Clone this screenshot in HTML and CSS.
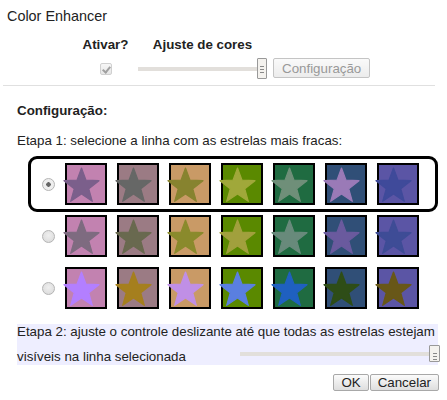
FILE: index.html
```html
<!DOCTYPE html>
<html lang="pt">
<head>
    <meta charset="UTF-8">
    <title>Color Enhancer</title>
    <link rel="stylesheet" href="styles.css">
</head>
<body>
    <div id="title">Color Enhancer</div>

    <div class="controls">
        <div class="head">Ativar?</div>
        <div class="head">Ajuste de cores</div>
        <div></div>
        <div class="cell-center"><span class="checkbox"></span></div>
        <div class="cell-slider"><div class="slider"><div class="track"></div><div class="thumb"></div></div></div>
        <div><button class="btn" disabled>Configuração</button></div>
    </div>

    <div class="separator"></div>

    <div id="setup">
        <div class="setup-title">Configuração:</div>
        <div class="step1">Etapa 1: selecione a linha com as estrelas mais fracas:</div>
        <div id="rows"></div>
        <div class="step2">
            <div class="step2-line">Etapa 2: ajuste o controle deslizante até que todas as estrelas estejam</div>
            <div class="step2-line second">
                <span>visíveis na linha selecionada</span>
                <div class="slider wide"><div class="track"></div><div class="thumb"></div></div>
            </div>
        </div>
        <div class="actions">
            <button class="btn">OK</button><button class="btn">Cancelar</button>
        </div>
    </div>

    <script>
        const squares = ['#c282b0', '#9b7b84', '#c99a66', '#5a8900', '#1f6b41', '#304f77', '#5b55a5'];
        const stars = [
            ['#7b5f8b', '#666766', '#87832f', '#a0a83a', '#6f8f79', '#9a7ab7', '#3f4a9a'],
            ['#7e6b80', '#69694f', '#8a8a2c', '#a1a03d', '#688a7b', '#6a5a9e', '#3e4c96'],
            ['#b37fff', '#a57f1e', '#c08fe6', '#5a7fe0', '#1f60c0', '#2e4d17', '#685718']
        ];
        const starPoints = '0,-18.4 4.5,-6.2 17.5,-5.7 7.3,2.4 10.8,14.9 0,7.7 -10.8,14.9 -7.3,2.4 -17.5,-5.7 -4.5,-6.2';

        function buildRows() {
            const rowsDiv = document.getElementById('rows');
            stars.forEach((row, i) => {
                const rowDiv = document.createElement('div');
                rowDiv.className = i === 0 ? 'row selected' : 'row';
                let html = `<span class="radio${i === 0 ? ' checked' : ''}"></span>`;
                row.forEach((star, j) => {
                    html += `<svg class="swatch" viewBox="0 0 42 42" width="42" height="42">
                        <rect x="1" y="1" width="40" height="40" fill="${squares[j]}" stroke="#000" stroke-width="2"/>
                        <polygon transform="translate(16.5 23.4)" points="${starPoints}" fill="${star}" stroke="${star}" stroke-width="1.2" stroke-linejoin="round"/>
                    </svg>`;
                });
                rowDiv.innerHTML = html;
                rowsDiv.appendChild(rowDiv);
            });
        }

        buildRows();
    </script>
</body>
</html>
```

FILE: styles.css
```css
body {
    margin: 0;
    width: 447px;
    font-family: "Liberation Sans", Arial, sans-serif;
    font-size: 13.33px;
    line-height: 15px;
    color: #222;
    background-color: #fff;
}

#title {
    font-size: 14.4px;
    line-height: 16px;
    padding: 8px 0 0 7px;
}

.controls {
    display: grid;
    grid-template-columns: 65px 129px auto;
    row-gap: 6px;
    margin: 13px 0 0 73px;
}

.head {
    font-weight: bold;
    text-align: center;
}

.cell-center {
    display: flex;
    justify-content: center;
    align-items: center;
}

.cell-slider {
    display: flex;
    align-items: center;
}

.checkbox {
    display: block;
    width: 12px;
    height: 12px;
    box-sizing: border-box;
    margin-left: 1px;
    border: 1px solid #d0d0d0;
    border-radius: 2px;
    background: linear-gradient(#f6f6f6, #e6e6e6);
    position: relative;
}

.checkbox::after {
    content: "";
    position: absolute;
    left: 3px;
    top: 1px;
    width: 3px;
    height: 6px;
    border: solid #a0a0a0;
    border-width: 0 2px 2px 0;
    transform: rotate(40deg);
}

.slider {
    display: flex;
    align-items: center;
    width: 129px;
    height: 21px;
}

.slider .track {
    flex: 1;
    height: 4px;
    background-color: #e2dfdb;
}

.slider .thumb {
    width: 10px;
    height: 21px;
    box-sizing: border-box;
    border: 1px solid #999;
    border-radius: 1px;
    background:
        linear-gradient(#888, #888) center 7px / 4px 1px no-repeat,
        linear-gradient(#888, #888) center 10px / 4px 1px no-repeat,
        linear-gradient(#888, #888) center 13px / 4px 1px no-repeat,
        #f4f2ee;
}

.btn {
    font-family: "Liberation Sans", Arial, sans-serif;
    font-size: 13.33px;
    line-height: 15px;
    color: #222;
    margin: 0;
    padding: 0 7px;
    border: 1px solid #a8a8a8;
    border-radius: 2px;
    background: linear-gradient(#fbfbfb, #dedede);
}

.controls .btn {
    margin-left: 6px;
    height: 20px;
    padding: 1px 8px;
}

.btn:disabled {
    color: #999;
    border-color: #c4c4c4;
    background: linear-gradient(#fafafa, #ececec);
}

.separator {
    height: 1px;
    background-color: #e0e0e0;
    margin: 6px 12px 0 3px;
}

#setup {
    padding: 0 9px 0 17px;
}

.setup-title {
    font-weight: bold;
    margin-top: 17px;
}

.step1 {
    margin-top: 15px;
}

#rows {
    margin-top: 10px;
}

.row {
    display: flex;
    align-items: center;
    gap: 10px;
    padding: 5px 0 5px 14px;
    margin-left: 11px;
}

.row.selected {
    border: 3px solid #000;
    border-radius: 9px;
    margin: -2px 0 -2px 11px;
    padding: 4px 0 4px 11px;
}

.radio {
    width: 13px;
    height: 13px;
    box-sizing: border-box;
    border: 1px solid #b4b4b4;
    border-radius: 50%;
    background: radial-gradient(circle at 50% 40%, #efefef, #d8d8d8);
}

.radio.checked {
    background: radial-gradient(circle, #666 0 2px, #eee 2.5px);
}

.swatch {
    display: block;
    overflow: visible;
}

.step2 {
    margin-top: 10px;
    background-color: #eeeeff;
}

.step2-line.second {
    display: flex;
    justify-content: space-between;
    align-items: flex-end;
    margin-top: 6px;
    padding-bottom: 1px;
}

.slider.wide {
    width: 200px;
    height: 17px;
    margin: 0 -2px 2px 0;
}

.slider.wide .thumb {
    height: 17px;
    width: 11px;
}

.actions {
    display: flex;
    justify-content: flex-end;
    gap: 1px;
    margin: 9px -1px 0 0;
}
```
